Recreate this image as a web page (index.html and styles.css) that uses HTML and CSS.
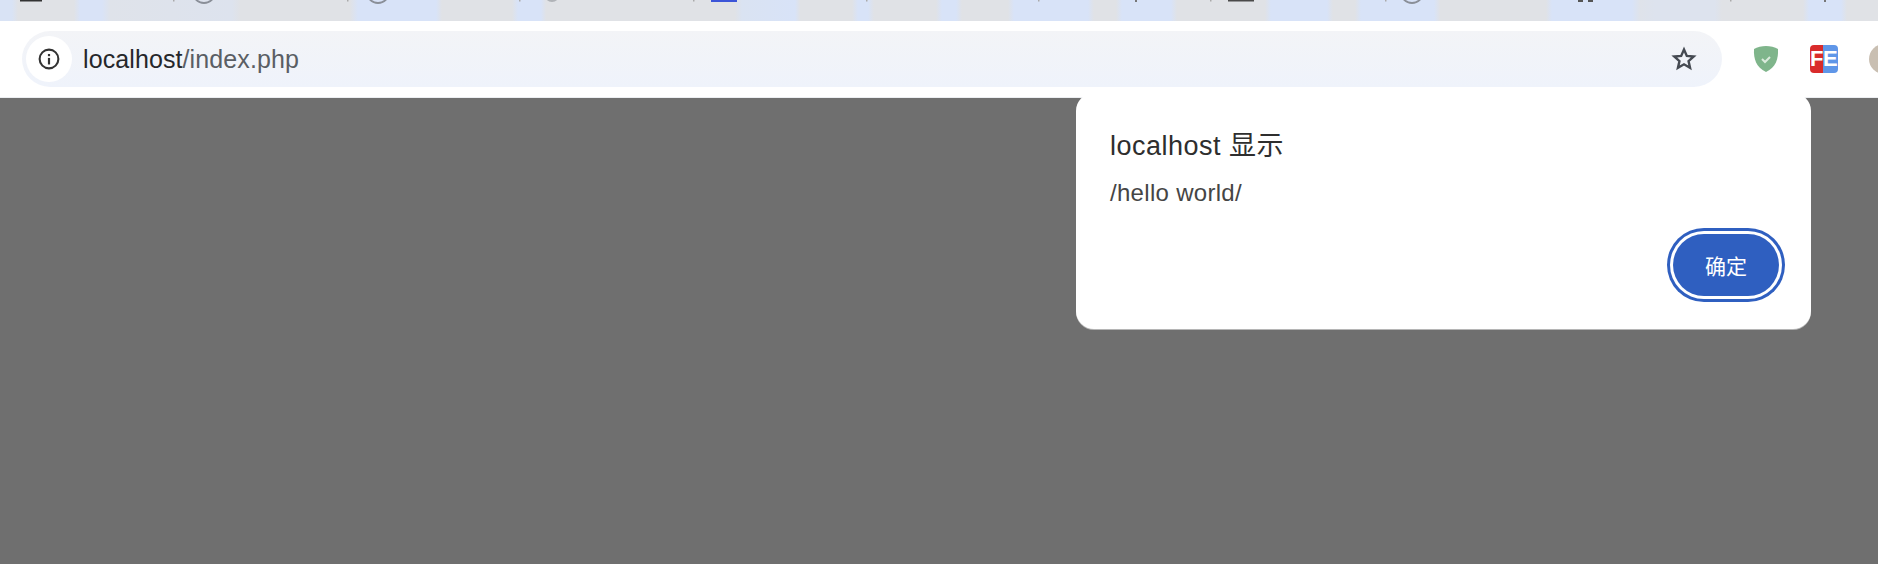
FILE: index.html
```html
<!doctype html>
<html>
<head>
<meta charset="UTF-8">
<title>localhost/index.php</title>
<link rel="stylesheet" href="styles.css">
</head>
<body>

<div class="tabstrip">
  <!-- only the bottoms of the favicons show above the crop line -->
  <svg class="tab-icons" width="1878" height="21" viewBox="0 0 1878 21">
    <rect x="20" y="0" width="22" height="1.5" fill="#333"/>
    <g fill="none" stroke="#8a8f98" stroke-width="1.8">
      <circle cx="204" cy="-8" r="11"/>
      <circle cx="378" cy="-8" r="11"/>
      <circle cx="1412" cy="-8" r="11"/>
      <circle cx="552" cy="-6" r="7" stroke="#b0b3b8"/>
    </g>
    <rect x="711" y="0" width="26" height="2" fill="#3c55d8"/>
    <rect x="1228" y="0" width="26" height="1.5" fill="#4a4a4a"/>
    <g fill="#555">
      <rect x="1578" y="0" width="5" height="2"/>
      <rect x="1588" y="0" width="5" height="2"/>
    </g>
    <g fill="#aaa">
      <rect x="173" y="0" width="1.5" height="1.5"/>
      <rect x="347" y="0" width="1.5" height="1.5"/>
      <rect x="519" y="0" width="1.5" height="1.5"/>
      <rect x="693" y="0" width="1.5" height="1.5"/>
      <rect x="866" y="0" width="1.5" height="1.5"/>
      <rect x="1038" y="0" width="1.5" height="1.5"/>
      <rect x="1135" y="0" width="2" height="2" fill="#777"/>
      <rect x="1210" y="0" width="1.5" height="1.5"/>
      <rect x="1385" y="0" width="1.5" height="1.5"/>
      <rect x="1730" y="0" width="1.5" height="1.5"/>
      <rect x="1824" y="0" width="2" height="2" fill="#777"/>
    </g>
  </svg>
</div>

<div class="toolbar">
  <div class="omnibox">
    <span class="site-info">
      <svg width="24" height="24" viewBox="0 0 22 22">
        <circle cx="11" cy="11" r="8.6" fill="none" stroke="#333" stroke-width="1.9"/>
        <rect x="10" y="10" width="2" height="6" fill="#333"/>
        <rect x="10" y="6.4" width="2" height="2" fill="#333"/>
      </svg>
    </span>
    <span class="url">localhost<span class="url-path">/index.php</span></span>
    <svg class="star" width="26" height="26" viewBox="0 0 24 24">
      <path d="M12 3.2l2.6 5.9 6.4.6-4.8 4.2 1.4 6.3-5.6-3.3-5.6 3.3 1.4-6.3L3 9.7l6.4-.6z" fill="none" stroke="#454a52" stroke-width="2.2"/>
    </svg>
  </div>
  <div class="extensions">
    <svg width="26" height="28" viewBox="0 0 26 28">
      <path d="M13 1c4 0 9 1 12 3 .5 10-2 18-12 23C3 22 .5 14 1 4c3-2 8-3 12-3z" fill="#7fb58b"/>
      <path d="M9 14l3 3 5-5" fill="none" stroke="#dcebdd" stroke-width="2"/>
    </svg>
    <span class="fe-badge"><span class="fe-letter">F</span><span class="fe-letter fe-right">E</span></span>
    <span class="avatar"></span>
  </div>
</div>

<div class="page">
  <div class="dialog">
    <div class="dialog-title">localhost 显示</div>
    <div class="dialog-msg">/hello world/</div>
    <div class="dialog-actions">
      <button class="ok-btn" type="button">确定</button>
    </div>
  </div>
</div>

</body>
</html>
```
FILE: styles.css
```css
html, body {
  margin: 0;
  height: 100%;
  overflow: hidden;
}

body {
  background-color: #6f6f6f;
  font-family: "Liberation Sans", "Noto Sans CJK SC", sans-serif;
}

/* tab strip, mostly cut off by the crop */
.tabstrip {
  height: 21px;
  overflow: hidden;
  background-color: #e0e2e6;
  background-image: linear-gradient(90deg,
    #d9e3f5 0, #d9e3f5 12px, #e0e2e6 18px, #e0e2e6 74px,
    #d9e3f7 80px, #d9e3f7 102px, #dfe3ea 110px, #dde3ee 232px, #e0e2e6 240px,
    #e0e2e6 350px, #d8e3f8 358px, #d8e3f8 436px, #e0e2e6 442px,
    #e0e2e6 512px, #d8e3f8 518px, #d8e3f8 541px, #e0e2e6 546px,
    #e0e2e6 735px, #dae3f2 742px, #d8e3f8 795px, #e0e2e6 800px,
    #e0e2e6 852px, #d8e3f8 858px, #d8e3f8 868px, #e0e2e6 874px,
    #e0e2e6 936px, #d8e3f8 942px, #d8e3f8 956px, #e0e2e6 962px,
    #e0e2e6 1008px, #d8e3f8 1014px, #d8e3f8 1088px, #e0e2e6 1094px,
    #e0e2e6 1116px, #d8e3f8 1122px, #d8e3f8 1171px, #e0e2e6 1177px,
    #e0e2e6 1265px, #d8e3f8 1271px, #d8e3f8 1327px, #e0e2e6 1333px,
    #e0e2e6 1355px, #d8e3f8 1361px, #d8e3f8 1434px, #e0e2e6 1440px,
    #e0e2e6 1546px, #d8e3f8 1552px, #d8e3f8 1632px, #dfe3ea 1640px,
    #dde3ee 1655px, #dde3ee 1715px, #e0e2e6 1722px,
    #e0e2e6 1803px, #d8e3f8 1809px, #d8e3f8 1841px, #e0e2e6 1847px);
}

.tab-icons {
  display: block;
  filter: blur(0.6px);
}

.toolbar {
  display: flex;
  align-items: center;
  height: 77px;
  padding-left: 22px;
  background-color: #fff;
  border-bottom: 1px solid #eceef1;
  box-sizing: border-box;
  overflow: hidden;
}

.omnibox {
  display: flex;
  align-items: center;
  flex-shrink: 0;
  width: 1700px;
  height: 56px;
  padding: 0 25px 0 4px;
  box-sizing: border-box;
  border-radius: 28px;
  background-image: linear-gradient(#f3f4f7, #eff3fb);
}

.site-info {
  display: flex;
  align-items: center;
  justify-content: center;
  width: 46px;
  height: 46px;
  border-radius: 50%;
  background-color: #fff;
}

.url {
  margin-left: 11px;
  flex: 1;
  font-size: 25px;
  letter-spacing: 0.1px;
  color: #25272b;
}

.url-path { color: #5a5e64; }

.extensions {
  display: flex;
  align-items: center;
  flex-shrink: 0;
  margin-left: 31px;
  gap: 31px;
}

.fe-badge {
  display: flex;
  width: 28px;
  height: 28px;
  border-radius: 4px;
  overflow: hidden;
}

.fe-letter {
  width: 13px;
  line-height: 28px;
  text-align: right;
  font-size: 22px;
  font-weight: bold;
  color: #fff;
  background-color: #d92b2b;
}

.fe-right {
  width: 15px;
  text-align: left;
  background-color: #5f96e8;
}

.avatar {
  width: 30px;
  height: 30px;
  border-radius: 50%;
  background-color: #c9bfb2;
  flex-shrink: 0;
}

/* greyed page with the alert over it */
.page {
  position: relative;
}

.dialog {
  position: absolute;
  left: 1076px;
  top: -5px;
  width: 735px;
  height: 236px;
  box-sizing: border-box;
  padding: 38px 32px 0 34px;
  background-color: #fff;
  border-radius: 18px;
  box-shadow: 0 1px 0 #b5b5b5;
}

.dialog-title {
  font-size: 27px;
  line-height: 30px;
  letter-spacing: 0.5px;
  color: #2e2e2e;
}

.dialog-msg {
  margin-top: 19px;
  font-size: 24px;
  line-height: 26px;
  letter-spacing: 0.3px;
  color: #454545;
}

.dialog-actions {
  display: flex;
  justify-content: flex-end;
  margin-top: 28px;
}

.ok-btn {
  width: 106px;
  height: 62px;
  border: 0;
  border-radius: 31px;
  background-color: #2f5fc0;
  box-shadow: 0 0 0 3px #fff, 0 0 0 6px #2f5fc0;
  color: #fff;
  font-family: "Liberation Sans", "Noto Sans CJK SC", sans-serif;
  font-size: 21px;
}
```
